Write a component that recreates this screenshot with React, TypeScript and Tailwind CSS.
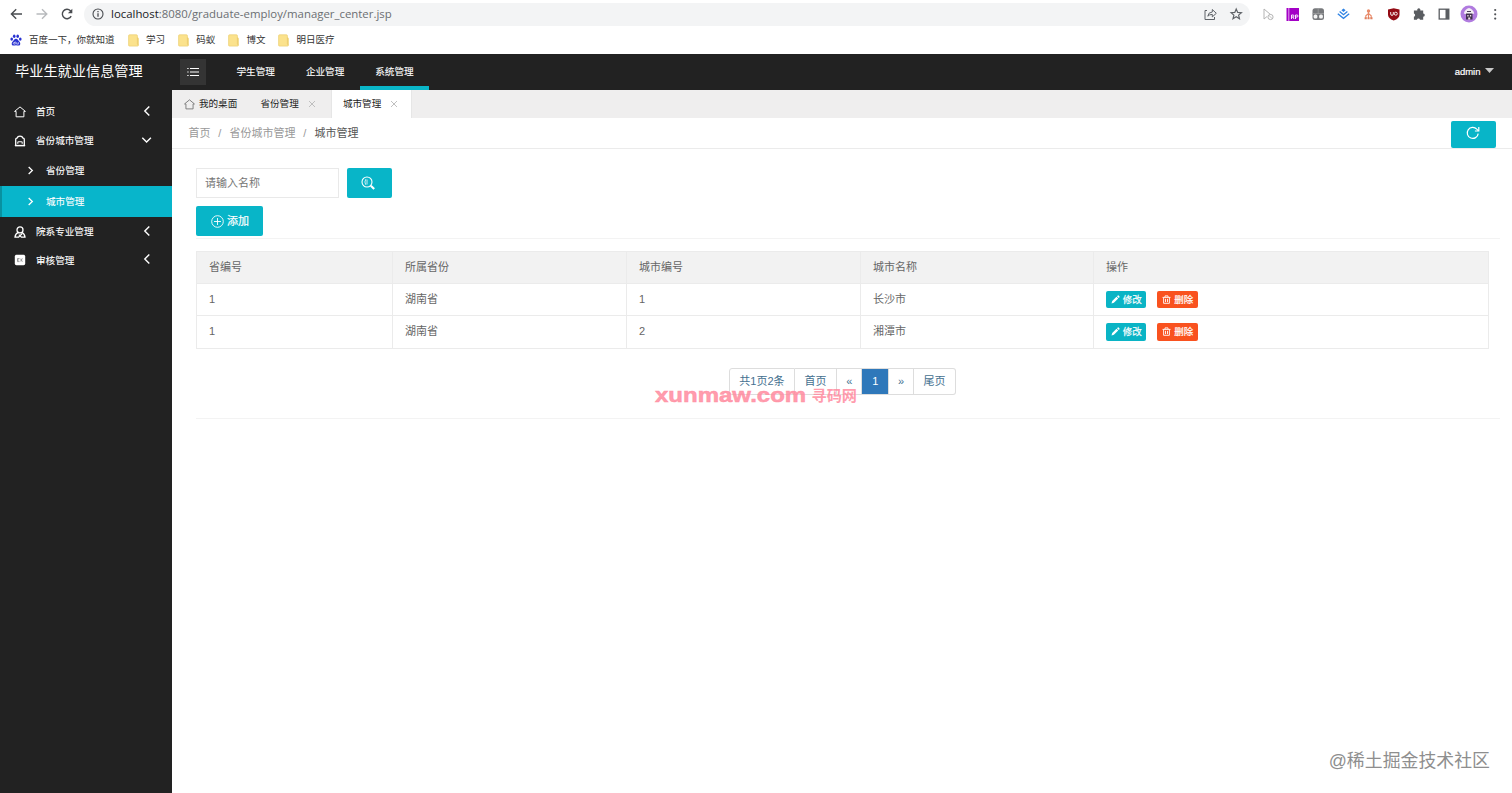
import React from "react";

const cn = (...parts: (string | false | undefined)[]) => parts.filter(Boolean).join(" ");

type IconProps = { className?: string };

const HomeIcon = ({ className }: IconProps) => (
  <svg viewBox="0 0 12 12" className={className} fill="none" stroke="currentColor" strokeWidth="1">
    <path d="M.6 5.4 6 .9l5.4 4.5H9.9v5.4H2.1V5.4Z" strokeLinejoin="round" />
  </svg>
);

const Chevron = ({ dir, className }: { dir: "left" | "right" | "down"; className?: string }) => {
  const d = { left: "M8.3 1.5 3.8 6l4.5 4.5", right: "M4 2.2 8 6l-4 3.8", down: "M1.3 3.8 5.6 8.1l4.3-4.3" }[dir];
  return (
    <svg viewBox="0 0 12 12" className={className} fill="none" stroke="currentColor" strokeWidth="1.4">
      <path d={d} />
    </svg>
  );
};

const BagIcon = ({ className }: IconProps) => (
  <svg viewBox="0 0 12 12" className={className} fill="none" stroke="currentColor" strokeWidth="1.3">
    <path d="M1.7 10.6V4.4Q1.7 3.4 2.9 3.2 3.7 1.2 6 1.2t3.100 2q1.200.2 1.200 1.200v6.200Z" />
    <path d="M.8 10.500h10.400" />
    <path d="M3.800 8.800V7.600q0-.8.800-.8h2.800q.8 0 .8.800v1.200" strokeWidth="1.100" />
  </svg>
);

const UserIcon = ({ className }: IconProps) => (
  <svg viewBox="0 0 12 12" className={className} fill="none" stroke="currentColor" strokeWidth="1.300">
    <circle cx="6" cy="3.900" r="3" />
    <path d="M4.200 6.300Q1.200 7.800 1 11.100h3.600L8 7.800M7.800 6.300q3 1.500 3.200 4.800H7.400L4.800 8.600" />
  </svg>
);

const BadgeIcon = ({ className }: IconProps) => (
  <svg viewBox="0 0 12 12" className={className}>
    <rect x=".8" y=".8" width="10.4" height="10.4" rx="1.600" fill="#fff" />
    <path d="M3.500 4.500h2M3.500 6h1.600M3.500 7.600h2M3.500 4.500v3.100M7 4.500v3.100M8.500 4.500 7.300 6l1.200 1.600" fill="none" stroke="#777" strokeWidth=".7" />
  </svg>
);

const CloseIcon = ({ className }: IconProps) => (
  <svg viewBox="0 0 8 8" className={className} fill="none" stroke="#b9b9b9" strokeWidth=".9">
    <path d="m1 1 6 6M7 1 1 7" />
  </svg>
);

const RefreshIcon = ({ className }: IconProps) => (
  <svg viewBox="0 0 14 14" className={className} fill="none" stroke="currentColor" strokeWidth="1.200">
    <path d="M12.2 7.6A5.5 5.5 0 1 1 10.8 3.2l1.600 1.600" />
    <path d="M12.800 1v4H8.900" />
  </svg>
);

const Folder = () => (
  <svg viewBox="0 0 11 13" className="h-[13px] w-[11px]">
    <path d="M.6 1.700Q.6.8 1.500.8h7q.9 0 .9.9v1.900q1 .1 1 1v6.600q0 .9-.9.9h-8q-.9 0-.9-.9Z" fill="#fbe28c" stroke="#ecd071" strokeWidth=".7" />
    <path d="M9.400 3.600v6.500l1 1" fill="none" stroke="#e3c15c" strokeWidth=".6" />
  </svg>
);

const BaiduIcon = () => (
  <svg viewBox="0 0 12 12" className="h-3 w-3" fill="#2932d1">
    <ellipse cx="4.200" cy="2.200" rx="1.300" ry="1.800" />
    <ellipse cx="7.700" cy="2.200" rx="1.300" ry="1.800" />
    <ellipse cx="1.700" cy="5.100" rx="1.300" ry="1.600" />
    <ellipse cx="10.300" cy="5.100" rx="1.300" ry="1.600" />
    <path d="M6 4.800c1.700 0 2.100 1.600 3.200 2.600 1.600 1.400 1.500 4.200-.8 4.200-1 0-1.500-.3-2.400-.3s-1.400.3-2.400.3c-2.300 0-2.400-2.800-.8-4.200C3.900 6.400 4.300 4.800 6 4.800Z" />
    <path d="M5.200 7.400v2.700H4q-.7-.1-.7-.8t.7-.8h1.200M6.700 8.200v1.900h1.700V8.200" fill="none" stroke="#fff" strokeWidth=".6" />
  </svg>
);

const bookmarks = ["学习", "码蚁", "博文", "明日医疗"];

function BrowserBar() {
  return (
    <div className="h-[54px] shrink-0 bg-white text-[#4a4d51]">
      <div className="flex h-7 items-center">
        <svg viewBox="0 0 76 14" className="ml-[8px] h-[14px] w-[76px]" fill="none" strokeWidth="1.400">
          <path d="M14 7H3.500M8.200 2.200 3.400 7l4.800 4.800" stroke="#4a4d51" />
          <path d="M28.500 7H38.500M34 2.200 38.800 7 34 11.800" stroke="#b8babd" />
          <path d="M63.200 9.200A4.700 4.700 0 1 1 62.400 3.700L63.600 5" stroke="#4a4d51" />
          <path d="M64.300 1.800v4.400h-4.400Z" fill="#4a4d51" stroke="none" />
        </svg>
        <div className="flex h-[23px] w-[1166px] items-center rounded-full bg-[#f3f4f5]">
          <svg viewBox="0 0 12 12" className="ml-[8px] h-3 w-3" fill="none" stroke="#4a4d51" strokeWidth="1.100">
            <circle cx="6" cy="6" r="5" />
            <path d="M6 5.300v3.500M6 3v1.300" strokeWidth="1.300" />
          </svg>
          <span className="ml-[7px] whitespace-nowrap font-['Open_Sans',sans-serif] text-[11.400px] leading-none text-[#6b6e72]">
            <span className="text-[#202124]">localhost</span>:8080/graduate-employ/manager_center.jsp
          </span>
          <svg viewBox="0 0 40 14" className="ml-auto mr-[7px] h-[14px] w-[40px]" fill="none" stroke="#5f6368" strokeWidth="1">
            <path d="M4 3.500H2v9h9.500V10" />
            <path d="M4.800 9.200q.4-4 4.500-4.200V2.500l4 3.800-4 3.600V7.400q-3 0-4.500 1.800Z" />
            <path d="m33.200 2 1.500 3.400 3.700.3-2.800 2.400.9 3.600-3.300-1.900-3.200 1.900.9-3.600-2.800-2.400 3.700-.3Z" strokeWidth="1.200" />
          </svg>
        </div>
        <svg viewBox="0 0 262 28" className="h-7 w-[262px]" fill="none">
          <path d="M14 9v10l3-2.500M14 9l6.500 5.500" stroke="#b4b4b4" />
          <circle cx="20.500" cy="17" r="2.600" stroke="#b4b4b4" />
          <path d="m18.700 15.200 3.600 3.600" stroke="#b4b4b4" strokeWidth=".8" />
          <path d="M36.500 8H49v13H36.500Z" fill="#a300c6" />
          <path d="M38.800 8v13" stroke="#f0c8f5" strokeWidth=".8" />
          <path d="M41.500 19v-4h1.500q1 0 1 1t-1 1h-1.500M43 17l1 2M45.500 19v-4H47q1 0 1 1t-1 1h-1.500" stroke="#fff" strokeWidth=".9" />
          <rect x="62.500" y="8.200" width="11.500" height="11.800" rx="2.500" fill="#77797c" />
          <path d="M62.500 13.500H74M68.200 8.200v5.300" stroke="#a5a6a8" strokeWidth=".7" />
          <rect x="63.600" y="14.500" width="3.800" height="4" rx="1.500" fill="#f5f5f5" />
          <rect x="69.100" y="14.500" width="3.800" height="4" rx="1.500" fill="#f5f5f5" />
          <path d="m87.800 13.800 5.700 4.500 5.700-4.500M89.600 11.600l3.900 3.100 3.900-3.100" stroke="#2f83e4" strokeWidth="1.300" />
          <path d="m93.500 8.600 2.100 1.600-2.100 1.700-2.100-1.700Z" fill="#2f83e4" />
          <path d="M118.500 11v7.500M118.500 13.500l-2.700 2.300v2.200M118.500 13.500l2.700 2.300v2.200" stroke="#e98a69" strokeWidth="1.100" />
          <path d="M114.600 17.200h2.200v2h-2.200ZM117.500 17.200h2.100v2h-2.100ZM120.300 17.200h2.200v2h-2.200Z" fill="#e0805f" />
          <circle cx="118.500" cy="11" r="1.700" fill="#e98a69" />
          <path d="M143.700 8.200 149.500 9.500v5q0 4-5.800 6-5.700-2-5.700-6v-5Z" fill="#930b14" />
          <path d="M140.700 12v2q0 1.400 1.300 1.400t1.300-1.400v-2" stroke="#fff" strokeWidth=".9" />
          <circle cx="145.800" cy="13.700" r="1.500" stroke="#fff" strokeWidth=".9" />
          <path d="M167.300 10.500a1.600 1.600 0 1 1 3 0h2.900v3a1.600 1.600 0 1 1 0 3.200v3.100h-3.200a1.600 1.600 0 0 0-3.100 0h-3v-3.100a1.600 1.600 0 0 0 0-3.100v-3.100Z" fill="#5a5d61" />
          <rect x="189.200" y="9.200" width="9.600" height="9.800" stroke="#5a5d61" strokeWidth="1.300" />
          <path d="M195.500 9h3.500v10h-3.500Z" fill="#5a5d61" />
          <circle cx="219" cy="14" r="8.500" fill="#b07bdf" />
          <path d="M213.800 13.500q1-4.500 5.200-5.500 4.200 1 5.200 5.500l-1.700.5h-7Z" fill="#f4eef4" />
          <path d="M216 13.500h6.500v6H216Z" fill="#41324d" />
          <path d="M217.300 15h1.300v1.500h-1.300ZM219.900 15h1.300v1.500h-1.300ZM218.200 17.500h2v2h-2Z" fill="#f0dfe4" />
          <path d="M217 11.500h4" stroke="#4b3f58" />
          <circle cx="245.200" cy="10" r="1.100" fill="#505357" />
          <circle cx="245.200" cy="14.300" r="1.100" fill="#505357" />
          <circle cx="245.200" cy="18.600" r="1.100" fill="#505357" />
        </svg>
      </div>
      <div className="flex h-6 items-center pl-[10px] text-[9.500px] leading-none text-[#333]">
        <BaiduIcon />
        <span className="ml-[7px] w-[86.500px] whitespace-nowrap">百度一下，你就知道</span>
        {bookmarks.map((label) => (
          <span key={label} className="ml-[12px] flex items-center gap-[7.500px] whitespace-nowrap pr-[.7px]">
            <Folder />
            {label}
          </span>
        ))}
      </div>
    </div>
  );
}

function TopNav() {
  return (
    <header className="flex h-9 shrink-0 items-center bg-[#222] text-white">
      <div className="w-[180px] whitespace-nowrap pb-px pl-[15px] text-[14.200px] leading-none">毕业生就业信息管理</div>
      <div className="flex h-[26px] w-[26px] items-center justify-center bg-[#343434]">
        <svg viewBox="0 0 12 10" className="h-[10px] w-3" stroke="#fff" strokeWidth="1.200">
          <path d="M3 1.500h9M3 5h9M3 8.500h9M.3 1.500h1.300M.3 5h1.300M.3 8.500h1.300" />
        </svg>
      </div>
      <nav className="ml-[15px] flex h-full">
        {["学生管理", "企业管理", "系统管理"].map((t, i) => (
          <a
            key={t}
            className={cn(
              "flex w-[69.400px] items-center justify-center border-y-4 border-transparent text-[9.600px] leading-none [-webkit-text-stroke:0.1px]",
              i === 2 && "border-b-[#0ab6c8]"
            )}
          >
            {t}
          </a>
        ))}
      </nav>
      <div className="ml-auto mr-[18px] flex items-center gap-[4.500px] text-[9.500px] leading-none [-webkit-text-stroke:0.2px]">
        admin
        <svg viewBox="0 0 9 5" className="-mt-[3px] h-[5px] w-[9px]" fill="#c8c8c8">
          <path d="M0 0h9L4.500 5Z" />
        </svg>
      </div>
    </header>
  );
}

const itemIcon = "h-3 w-3 shrink-0";

function MenuItem({ icon, label, dir }: { icon: React.ReactNode; label: string; dir: "left" | "down" }) {
  return (
    <div className="flex h-[28.700px] items-center pl-[14px] pr-[19px]">
      {icon}
      <span className="ml-[10px]">{label}</span>
      <Chevron dir={dir} className="ml-auto h-3 w-3 -translate-y-px" />
    </div>
  );
}

function SubItem({ label, active }: { label: string; active?: boolean }) {
  return (
    <div
      className={cn(
        "flex h-[31.200px] items-center border-l-2 pl-[23px]",
        active ? "border-[#0891a0] bg-[#08b5cb]" : "border-transparent"
      )}
    >
      <Chevron dir="right" className="h-[11px] w-[11px]" />
      <span className="ml-[10px]">{label}</span>
    </div>
  );
}

function Sidebar() {
  return (
    <aside className="w-[172.400px] shrink-0 bg-[#222] pt-[7.700px] text-[9.600px] leading-none text-white [-webkit-text-stroke:0.1px]">
      <MenuItem icon={<HomeIcon className={itemIcon} />} label="首页" dir="left" />
      <MenuItem icon={<BagIcon className={itemIcon} />} label="省份城市管理" dir="down" />
      <SubItem label="省份管理" />
      <SubItem label="城市管理" active />
      <MenuItem icon={<UserIcon className={itemIcon} />} label="院系专业管理" dir="left" />
      <MenuItem icon={<BadgeIcon className={itemIcon} />} label="审核管理" dir="left" />
    </aside>
  );
}

function Tabs() {
  return (
    <div className="flex h-7 bg-[#efeeee] text-[9.600px] leading-none text-[#222]">
      <div className="flex w-[76px] items-center pl-[12px]">
        <HomeIcon className="mr-[3.500px] h-[11px] w-[11px] text-[#777]" />
        我的桌面
      </div>
      <div className="flex w-[82.500px] items-center pl-[12px]">
        省份管理
        <CloseIcon className="ml-[9px] h-2 w-2" />
      </div>
      <div className="flex w-[81.500px] items-center border-x border-[#e6e6e6] bg-white pl-[11px]">
        城市管理
        <CloseIcon className="ml-[9px] h-2 w-2" />
      </div>
    </div>
  );
}

const smallButton =
  "flex h-[17.500px] w-[40.500px] items-center justify-center gap-[3px] rounded-[2px] text-[9.500px] leading-none text-white [-webkit-text-stroke:0.200px]";

function RowActions() {
  return (
    <div className="flex gap-[11px]">
      <button className={cn(smallButton, "bg-[#0ab4c5]")}>
        <svg viewBox="0 0 9 9" className="h-[9px] w-[9px]" fill="#fff">
          <path d="M.5 8.500 1.200 6 5.500 1.800 7.200 3.500 2.900 7.800ZM6 1.300l.8-.8q.4-.3.8 0l.9.900q.3.400 0 .8l-.8.800Z" />
        </svg>
        修改
      </button>
      <button className={cn(smallButton, "bg-[#f9521f]")}>
        <svg viewBox="0 0 9 9" className="h-[9px] w-[9px]" fill="none" stroke="#fff" strokeWidth=".9">
          <path d="M.5 2.400h8M3 2.200V.9h3v1.300M1.600 2.600v5.700h5.800V2.600M3.500 3.800v3.300M5.500 3.800v3.300" />
        </svg>
        删除
      </button>
    </div>
  );
}

const rows = [
  { height: "h-[32px]", cells: ["1", "湖南省", "1", "长沙市"] },
  { height: "h-[33px]", cells: ["1", "湖南省", "2", "湘潭市"] },
];

const cell = "border border-[#ebebeb] py-0 pl-[12px] text-left font-normal";

function CityTable() {
  return (
    <table className="mt-[12px] w-[1293.500px] table-fixed border-collapse text-[11px] leading-none text-[#666]">
      <colgroup>
        <col className="w-[196px]" />
        <col className="w-[234px]" />
        <col className="w-[234px]" />
        <col className="w-[233px]" />
        <col />
      </colgroup>
      <thead>
        <tr className="h-[32px] bg-[#f2f2f2]">
          {["省编号", "所属省份", "城市编号", "城市名称", "操作"].map((h) => (
            <th key={h} className={cell}>{h}</th>
          ))}
        </tr>
      </thead>
      <tbody>
        {rows.map((r, i) => (
          <tr key={i} className={r.height}>
            {r.cells.map((c, j) => (
              <td key={j} className={cell}>{c}</td>
            ))}
            <td className={cell}>
              <RowActions />
            </td>
          </tr>
        ))}
      </tbody>
    </table>
  );
}

const pages = [
  { t: "共1页2条", w: "w-[66px]" },
  { t: "首页", w: "w-[42px]" },
  { t: "«", w: "w-[25.500px]" },
  { t: "1", w: "w-[26.500px]", active: true },
  { t: "»", w: "w-[25px]" },
  { t: "尾页", w: "w-[42px]" },
];

function Pagination() {
  return (
    <div className="relative ml-[533px] mt-[19px] flex h-[27px] w-[227px] text-[11px] leading-none text-[#44708f]">
      {pages.map((p, i) => (
        <a
          key={i}
          className={cn(
            "flex items-center justify-center border-y border-r border-[#ddd]",
            p.w,
            i === 0 && "rounded-l-[3px] border-l",
            i === 5 && "rounded-r-[3px]",
            p.active && "border-[#337ab7] bg-[#2f78ba] text-white"
          )}
        >
          {p.t}
        </a>
      ))}
      <div className="pointer-events-none absolute -left-[73.500px] top-[16.500px] flex h-[22px] items-center whitespace-nowrap font-bold leading-none text-[#ff8a9e]/85">
        <span className="w-[156px]">
          <span className="inline-block w-[120px] origin-left scale-x-[1.200] font-['Liberation_Sans',sans-serif] text-[20px] [-webkit-text-stroke:0.500px]">
            xunmaw.com
          </span>
        </span>
        <span className="text-[15.200px]">寻码网</span>
      </div>
    </div>
  );
}

const tealButton = "flex items-center justify-center rounded-[2px] bg-[#08b5c8] text-white";

function Content() {
  return (
    <main className="flex min-w-0 flex-1 flex-col bg-white">
      <Tabs />
      <div className="flex h-[31px] items-start border-b border-[#ebebeb] pl-[16px] pr-[16px] text-[11px] leading-none text-[#999]">
        <div className="flex h-[31px] items-center">
          首页<span className="w-[19px] text-center">/</span>省份城市管理
          <span className="w-[19px] text-center">/</span>
          <span className="text-[#555]">城市管理</span>
        </div>
        <button className={cn(tealButton, "ml-auto mt-[2.500px] h-[27.500px] w-[45px] pb-[3px] pr-[2px]")}>
          <RefreshIcon className="h-[14px] w-[14px]" />
        </button>
      </div>
      <div className="flex flex-col pl-[23.600px] pt-[19.400px]">
        <div className="flex gap-[8px]">
          <input
            placeholder="请输入名称"
            className="h-[30px] w-[143px] border border-[#e9e9e9] px-[8px] text-[11px] leading-none placeholder:text-[#757575]"
          />
          <button className={cn(tealButton, "h-[30px] w-[45px] pr-[2px]")}>
            <svg viewBox="0 0 14 14" className="h-[14px] w-[14px]" fill="none" stroke="#fff">
              <circle cx="6" cy="6" r="5" strokeWidth="1.100" />
              <path d="M4.800 3.200q-1.800 2.800 0 5.600M6 3.500v5" strokeWidth=".8" />
              <path d="m9.800 9.800 3.400 3.200" strokeWidth="2.200" />
            </svg>
          </button>
        </div>
        <button className={cn(tealButton, "mt-2 h-[30px] w-[67px] gap-[3px] pl-px text-[11px] leading-none [-webkit-text-stroke:0.200px]")}>
          <svg viewBox="0 0 13 13" className="h-[13px] w-[13px]" fill="none" stroke="#fff" strokeWidth=".9">
            <circle cx="6.500" cy="6.500" r="5.800" />
            <path d="M6.500 3v7M3 6.500h7" />
          </svg>
          添加
        </button>
        <div className="mt-[1.500px] h-px w-[1304px] bg-[#f3f3f3]" />
        <CityTable />
        <Pagination />
        <div className="mt-[23.500px] h-px w-[1304px] bg-[#f3f3f3]" />
      </div>
      <div className="mb-[22px] mr-[22px] mt-auto self-end whitespace-nowrap text-[17.900px] leading-none text-[#8e8e8e]">
        @稀土掘金技术社区
      </div>
    </main>
  );
}

export default function App() {
  return (
    <div className="flex h-[793px] w-[1512px] flex-col overflow-hidden bg-white font-['Liberation_Sans','Noto_Sans_CJK_SC',sans-serif]">
      <BrowserBar />
      <TopNav />
      <div className="flex min-h-0 flex-1">
        <Sidebar />
        <Content />
      </div>
    </div>
  );
}
